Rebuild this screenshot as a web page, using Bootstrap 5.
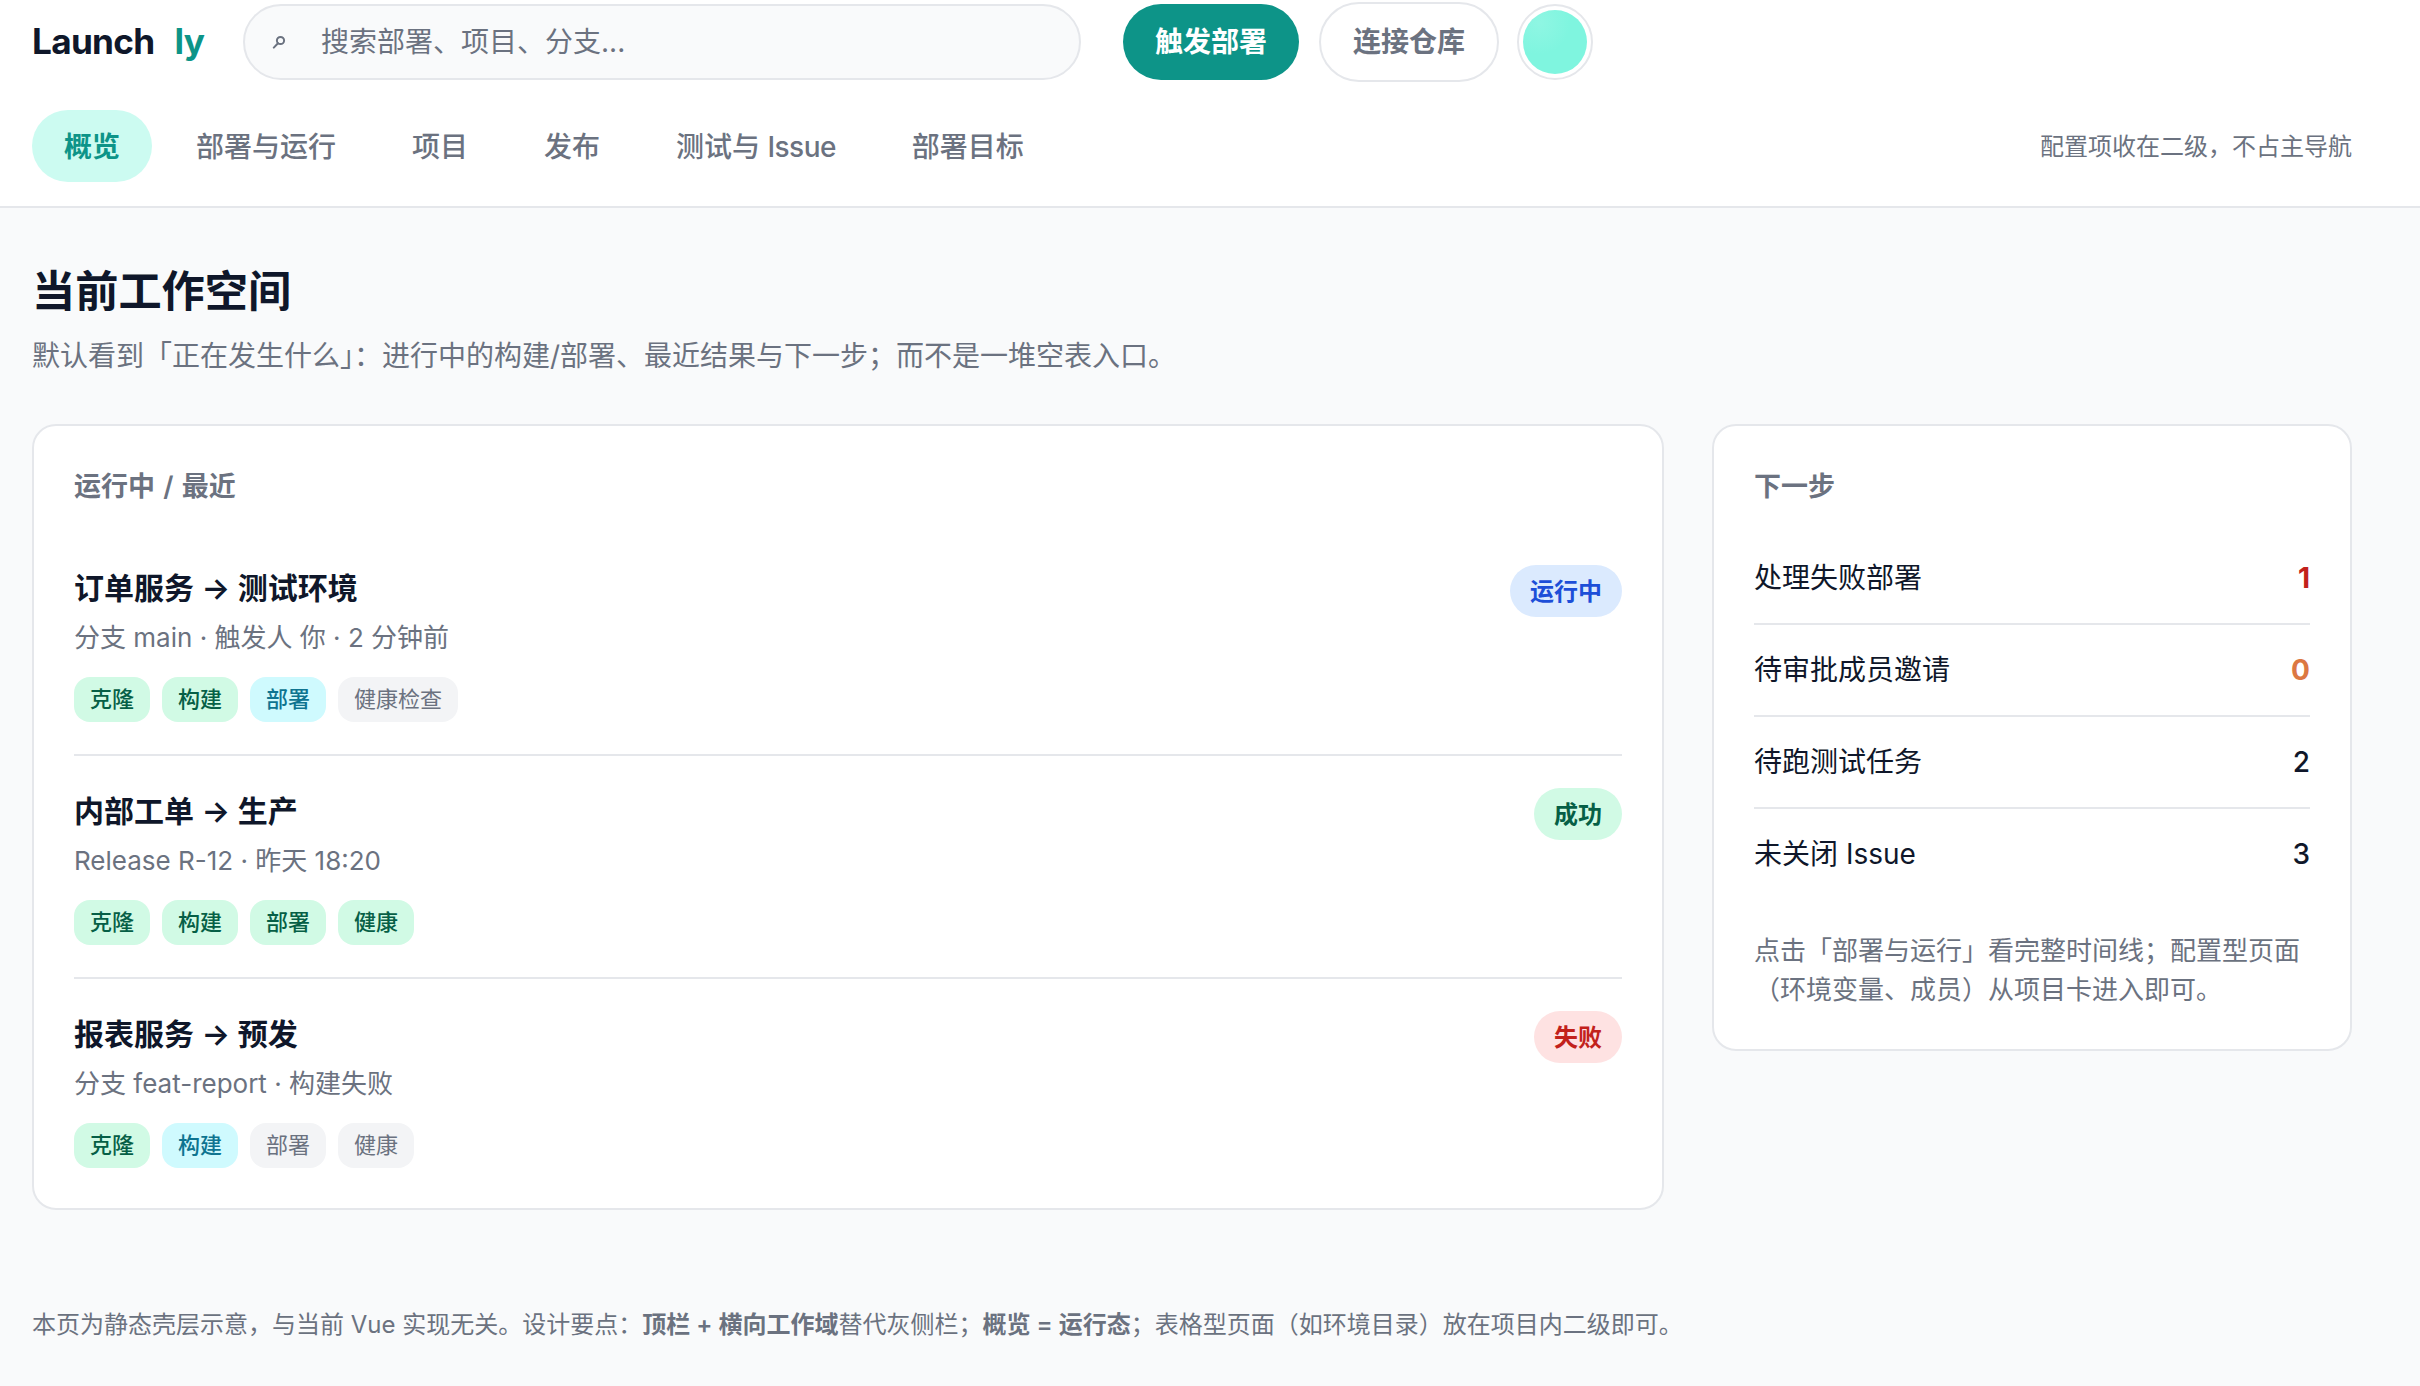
<!DOCTYPE html>
<html lang="zh-CN">
<head>
    <meta charset="UTF-8">
    <meta name="viewport" content="width=device-width, initial-scale=1.0">
    <title>Launchly</title>
    <link href="https://cdn.jsdelivr.net/npm/bootstrap@5.3.0/dist/css/bootstrap.min.css" rel="stylesheet">
    <style>
        body {
            background: #f9fafb;
            color: #0f172a;
            font-family: Inter, "Noto Sans CJK SC", sans-serif;
            font-size: 28px;
            line-height: 1.5;
        }
        .app-head { background: #fff; border-bottom: 2px solid #e5e7eb; padding: 2px 68px 24px 32px; }
        .app-top { height: 80px; margin-bottom: 28px; }
        .app-logo { font-size: 35.2px; font-weight: 700; letter-spacing: -0.02em; gap: 20px; width: 211px; line-height: 1; }
        .app-logo span:last-child { color: #0d9488; }
        .app-search {
            width: 838px; height: 76px; margin-right: 42px; padding: 0 32px 0 27px; gap: 35px;
            background: #f9fafb; border: 2px solid #e5e7eb; border-radius: 38px; color: #6b7280;
        }
        .app-search svg { width: 14px; height: 14px; }
        .btn-go, .btn-link-repo { font-size: 28px; font-weight: 600; line-height: 42px; border-radius: 40px; }
        .btn-go { background: #0d9488; color: #fff; border: 0; padding: 17px 32px; }
        .btn-link-repo { background: #fff; color: #6b7280; border: 2px solid #e5e7eb; padding: 17px 32px; margin-left: 20px; margin-right: 18px; }
        .app-avatar { width: 76px; height: 76px; padding: 4px; border: 2px solid #e5e7eb; border-radius: 50%; background: #fff; }
        .app-avatar div { width: 100%; height: 100%; border-radius: 50%; background: radial-gradient(circle at 25% 20%, #8ff6e3, #7ff5df 45%); }
        .app-nav { gap: 12px; }
        .app-nav .nav-link { font-size: 28px; font-weight: 500; color: #6b7280; padding: 16px 32px 14px; border-radius: 36px; line-height: 42px; }
        .app-nav .nav-link.active { background: #ccfbf1; color: #0d9488; font-weight: 600; }
        .nav-word { letter-spacing: -0.02em; }
        .nav-note { font-size: 24px; color: #6b7280; padding-top: 2px; }
        .app-main { padding: 48px 68px 0 32px; }
        .page-title { font-size: 43.2px; font-weight: 700; line-height: 66px; padding-top: 2px; margin-bottom: 10px; }
        .page-sub { font-size: 28px; color: #6b7280; padding-top: 1px; margin-bottom: 47px; }
        .app-grid { gap: 48px; align-items: flex-start; }
        .panel { background: #fff; border: 2px solid #e5e7eb; border-radius: 24px; padding: 40px; }
        .panel-run { flex: 1 1 0; }
        .panel-next { width: 640px; flex: none; }
        .panel-title { font-size: 27px; font-weight: 600; color: #6b7280; line-height: 39px; word-spacing: 1.5px; padding-top: 1px; margin-bottom: 27px; }
        .run-item { padding: 32px 0; border-bottom: 2px solid #e5e7eb; }
        .run-item:last-child { padding-bottom: 0; border-bottom: 0; }
        .run-name { font-size: 30px; font-weight: 600; line-height: 45px; padding-top: 1px; margin-bottom: 7px; }
        .run-meta { font-size: 26px; line-height: 39px; color: #6b7280; margin-bottom: 20px; }
        .run-state { font-size: 24px; font-weight: 600; line-height: 36px; padding: 9px 20px 7px; border-radius: 26px; }
        .st-blue { background: #dbeafe; color: #1d4ed8; }
        .st-green { background: #d1fae5; color: #065f46; }
        .st-red { background: #fee2e2; color: #c2211b; }
        .tag-row { gap: 12px; }
        .step-tag { font-size: 22px; font-weight: 500; line-height: 33px; padding: 6px 16px; border-radius: 16px; }
        .tag-ok { background: #d1fae5; color: #065f46; }
        .tag-now { background: #cffafe; color: #0e7490; }
        .tag-wait { background: #f3f4f6; color: #6b7280; font-weight: 400; }
        .next-row { font-size: 28px; line-height: 42px; padding: 24px 0; border-bottom: 2px solid #e5e7eb; }
        .next-row:last-of-type { border-bottom: 0; }
        .next-num { font-weight: 500; }
        .num-red { color: #c2211b; font-weight: 700; }
        .num-orange { color: #dc7842; font-weight: 700; }
        .next-tip { font-size: 26px; line-height: 39px; color: #6b7280; margin: 32px 0 0; }
        .app-foot { font-size: 24px; line-height: 36px; color: #6b7280; padding: 97px 32px 0; }
        .app-foot strong { font-weight: 600; }
    </style>
</head>
<body>

    <header class="app-head">
        <div class="app-top d-flex align-items-center">
            <div class="app-logo d-flex align-items-center"><span>Launch</span><span>ly</span></div>
            <div class="app-search d-flex align-items-center">
                <svg viewBox="0 0 14 14" fill="none" stroke="#6b7280" stroke-width="2"><circle cx="8.5" cy="5.5" r="3.6"/><path d="M6 8.2 1.8 12.6" stroke-linecap="round"/></svg>
                <span>搜索部署、项目、分支...</span>
            </div>
            <div class="d-flex align-items-center">
                <button class="btn btn-go">触发部署</button>
                <button class="btn btn-link-repo">连接仓库</button>
                <div class="app-avatar"><div></div></div>
            </div>
        </div>
        <div class="d-flex align-items-center justify-content-between">
            <ul class="nav app-nav">
                <li class="nav-item"><a class="nav-link active" href="#">概览</a></li>
                <li class="nav-item"><a class="nav-link" href="#">部署与运行</a></li>
                <li class="nav-item"><a class="nav-link" href="#">项目</a></li>
                <li class="nav-item"><a class="nav-link" href="#">发布</a></li>
                <li class="nav-item"><a class="nav-link" href="#">测试与 <span class="nav-word">Issue</span></a></li>
                <li class="nav-item"><a class="nav-link" href="#">部署目标</a></li>
            </ul>
            <div class="nav-note">配置项收在二级，不占主导航</div>
        </div>
    </header>

    <main class="app-main">
        <h1 class="page-title">当前工作空间</h1>
        <p class="page-sub">默认看到「正在发生什么」：进行中的构建/部署、最近结果与下一步；而不是一堆空表入口。</p>

        <div class="app-grid d-flex">
            <section class="panel panel-run">
                <div class="panel-title">运行中 / 最近</div>
                <div class="run-item">
                    <div class="d-flex justify-content-between align-items-start">
                        <div>
                            <div class="run-name">订单服务 → 测试环境</div>
                            <div class="run-meta">分支 main · 触发人 你 · 2 分钟前</div>
                            <div class="d-flex tag-row">
                                <span class="step-tag tag-ok">克隆</span>
                                <span class="step-tag tag-ok">构建</span>
                                <span class="step-tag tag-now">部署</span>
                                <span class="step-tag tag-wait">健康检查</span>
                            </div>
                        </div>
                        <span class="run-state st-blue">运行中</span>
                    </div>
                </div>
                <div class="run-item">
                    <div class="d-flex justify-content-between align-items-start">
                        <div>
                            <div class="run-name">内部工单 → 生产</div>
                            <div class="run-meta">Release R-12 · 昨天 18:20</div>
                            <div class="d-flex tag-row">
                                <span class="step-tag tag-ok">克隆</span>
                                <span class="step-tag tag-ok">构建</span>
                                <span class="step-tag tag-ok">部署</span>
                                <span class="step-tag tag-ok">健康</span>
                            </div>
                        </div>
                        <span class="run-state st-green">成功</span>
                    </div>
                </div>
                <div class="run-item">
                    <div class="d-flex justify-content-between align-items-start">
                        <div>
                            <div class="run-name">报表服务 → 预发</div>
                            <div class="run-meta">分支 feat-report · 构建失败</div>
                            <div class="d-flex tag-row">
                                <span class="step-tag tag-ok">克隆</span>
                                <span class="step-tag tag-now">构建</span>
                                <span class="step-tag tag-wait">部署</span>
                                <span class="step-tag tag-wait">健康</span>
                            </div>
                        </div>
                        <span class="run-state st-red">失败</span>
                    </div>
                </div>
            </section>

            <aside class="panel panel-next">
                <div class="panel-title">下一步</div>
                <div class="next-row d-flex justify-content-between"><span>处理失败部署</span><span class="next-num num-red">1</span></div>
                <div class="next-row d-flex justify-content-between"><span>待审批成员邀请</span><span class="next-num num-orange">0</span></div>
                <div class="next-row d-flex justify-content-between"><span>待跑测试任务</span><span class="next-num">2</span></div>
                <div class="next-row d-flex justify-content-between"><span>未关闭 Issue</span><span class="next-num">3</span></div>
                <p class="next-tip">点击「部署与运行」看完整时间线；配置型页面（环境变量、成员）从项目卡进入即可。</p>
            </aside>
        </div>
    </main>

    <footer class="app-foot">本页为静态壳层示意，与当前 Vue 实现无关。设计要点：<strong>顶栏 + 横向工作域</strong>替代灰侧栏；<strong>概览 = 运行态</strong>；表格型页面（如环境目录）放在项目内二级即可。</footer>

    <script src="https://cdn.jsdelivr.net/npm/bootstrap@5.3.0/dist/js/bootstrap.bundle.min.js"></script>
</body>
</html>
